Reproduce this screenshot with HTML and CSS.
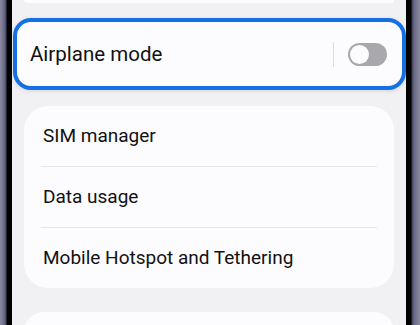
FILE: index.html
```html
<!DOCTYPE html>
<html>
	<head>
		<meta charset="utf-8">
		<title>Connections</title>
		<link rel="stylesheet" href="styles.css">
	</head>
	<body>
		<div class="phone">
			<div class="bezel bezel-left"></div>
			<div class="screen">
				<div class="card card-top"></div>
				<div class="card card-focus">
					<span class="label">Airplane mode</span>
					<span class="sep"></span>
					<span class="toggle"><span class="knob"></span></span>
				</div>
				<ul class="card list">
					<li>SIM manager</li>
					<li>Data usage</li>
					<li>Mobile Hotspot and Tethering</li>
				</ul>
				<div class="card card-next"></div>
			</div>
			<div class="bezel bezel-right"></div>
		</div>
	</body>
</html>
```
FILE: styles.css
```css
html, body {
	margin: 0;
	padding: 0;
}
body {
	width: 420px;
	height: 325px;
	overflow: hidden;
	font-family: Roboto, "Liberation Sans", sans-serif;
	color: #111;
}
ul {
	margin: 0;
	padding: 0;
	list-style: none;
}
.phone {
	display: flex;
	height: 325px;
}
.bezel-left {
	width: 12px;
	background: linear-gradient(to right, #8a8aa2 0, #6c6b88 4px, #4a4966 6px, #000 7px, #000 12px);
}
.bezel-right {
	width: 14px;
	background: linear-gradient(to right, #000 0, #000 5px, #3e3d58 6px, #6a6986 8px, #8a8aa2 14px);
}
.screen {
	flex: 1;
	background: #f1f1f3;
	display: flex;
	flex-direction: column;
	overflow: hidden;
}
.card {
	flex-shrink: 0;
	background: #fcfcfe;
	margin: 0 12px;
	border-radius: 24px;
}
.card-top {
	height: 3px;
	border-radius: 0 0 14px 14px;
}
.card-focus {
	margin: 15px 0 16px 1px;
	height: 64px;
	border: 4px solid #1570e6;
	border-radius: 18px;
	display: flex;
	align-items: center;
	padding: 0 15px 0 13px;
	box-shadow: 0 1px 4px rgba(0, 0, 0, .12);
}
.label {
	flex: 1;
	font-size: 20.5px;
}
.sep {
	width: 1px;
	height: 25px;
	background: #dcdcdf;
	margin-right: 14px;
}
.toggle {
	width: 39px;
	height: 23px;
	border-radius: 12px;
	background: #a9a8ad;
	display: flex;
	align-items: center;
	padding-left: 2px;
	box-sizing: border-box;
}
.knob {
	width: 19px;
	height: 19px;
	border-radius: 50%;
	background: #fcfcfe;
}
.list li {
	height: 60px;
	line-height: 60px;
	padding-left: 19px;
	font-size: 19px;
	position: relative;
}
.list li + li {
	border-top: 1px solid transparent;
}
.list li + li::before {
	content: "";
	position: absolute;
	left: 17px;
	right: 17px;
	top: -1px;
	height: 1px;
	background: #e6e6e9;
}
.card-next {
	margin-top: 24px;
	height: 40px;
}
```
